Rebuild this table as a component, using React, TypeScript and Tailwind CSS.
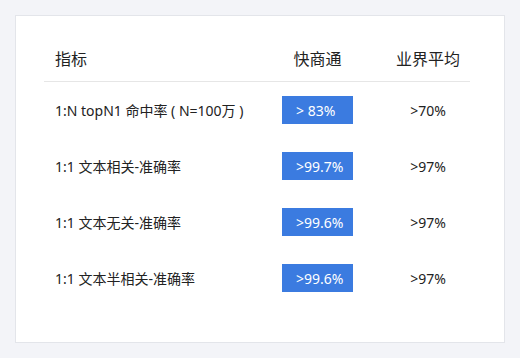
const rows = [
    { name: '1:N topN1 命中率 ( N=100万 )', ours: '> 83%', avg: '>70%' },
    { name: '1:1 文本相关-准确率', ours: '>99.7%', avg: '>97%' },
    { name: '1:1 文本无关-准确率', ours: '>99.6%', avg: '>97%' },
    { name: '1:1 文本半相关-准确率', ours: '>99.6%', avg: '>97%' },
];

export default function App() {
    return (
        <div
            className="h-[358px] w-[520px] bg-[#f3f4f8] p-[15px]"
            style={{ fontFamily: '"Noto Sans", "Noto Sans CJK SC", sans-serif' }}
        >
            <div className="h-[328px] w-[490px] border border-[#e3e5ea] bg-white pl-[28px] pr-[34px] pt-[20px]">
                <div className="grid h-[46px] grid-cols-[238px_71px_1fr] items-center border-b border-[#e6e6e6] text-[16px] text-[#222]">
                    <div className="pl-[11px]">指标</div>
                    <div className="text-center">快商通</div>
                    <div className="pl-[33px] text-center">业界平均</div>
                </div>
                {rows.map((r) => (
                    <div
                        key={r.name}
                        className="grid h-[56px] grid-cols-[238px_71px_1fr] items-center text-[14px] text-[#222]"
                    >
                        <div className="whitespace-pre pl-[11px]">{r.name}</div>
                        <div className="flex h-[28px] items-center bg-[#3b7be0] pl-[14px] text-white">
                            {r.ours}
                        </div>
                        <div className="pl-[33px] text-center">{r.avg}</div>
                    </div>
                ))}
            </div>
        </div>
    );
}
